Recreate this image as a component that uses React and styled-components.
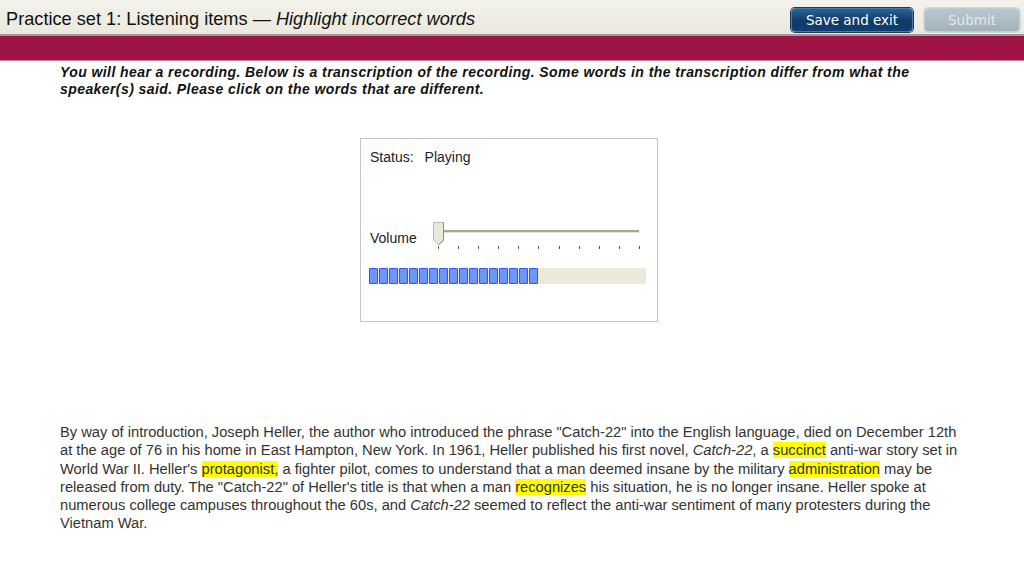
import React from "react";
import styled, { createGlobalStyle } from "styled-components";

const GlobalStyle = createGlobalStyle`
    body{
        margin: 0;
        background: #FFFFFF;
        font-family: "Liberation Sans", Arial, sans-serif;
    }
`;

export default function App() {
    const ticks = Array.from({ length: 11 });
    const played = Array.from({ length: 17 });

    return (
        <Page>
            <GlobalStyle />
            <TopBar>
                <h1>Practice set 1: Listening items — <em>Highlight incorrect words</em></h1>
                <Actions>
                    <Button>Save and exit</Button>
                    <Button disabled>Submit</Button>
                </Actions>
            </TopBar>
            <Band />
            <Content>
                <Directions>
                    You will hear a recording. Below is a transcription of the recording. Some words in the transcription differ from what the speaker(s) said. Please click on the words that are different.
                </Directions>
                <Player>
                    <StatusRow>
                        <span>Status:</span>
                        <span>Playing</span>
                    </StatusRow>
                    <VolumeRow>
                        <span>Volume</span>
                        <Slider>
                            <div className="track"></div>
                            <svg className="thumb" width="11" height="24" viewBox="0 0 11 24">
                                <path d="M0.5 0.5 H10.5 V18 L5.5 23 L0.5 18 Z" fill="#EAE7DB" stroke="#BDB9AA" />
                                <path d="M10.5 0.5 V18 L5.5 23" fill="none" stroke="#8F8B7E" />
                            </svg>
                            <div className="ticks">
                                {ticks.map((_, i) => <i key={i}></i>)}
                            </div>
                        </Slider>
                    </VolumeRow>
                    <Progress>
                        {played.map((_, i) => <Block key={i} />)}
                    </Progress>
                </Player>
                <Passage>
                    By way of introduction, Joseph Heller, the author who introduced the phrase "Catch-22" into the English language, died on December 12th at the age of 76 in his home in East Hampton, New York. In 1961, Heller published his first novel, <em>Catch-22</em>, a <Mark>succinct</Mark> anti-war story set in World War II. Heller's <Mark>protagonist,</Mark> a fighter pilot, comes to understand that a man deemed insane by the military <Mark>administration</Mark> may be released from duty. The "Catch-22" of Heller's title is that when a man <Mark>recognizes</Mark> his situation, he is no longer insane. Heller spoke at numerous college campuses throughout the 60s, and <em>Catch-22</em> seemed to reflect the anti-war sentiment of many protesters during the Vietnam War.
                </Passage>
            </Content>
        </Page>
    );
}

const Page = styled.div`
    width: 1024px;
    min-height: 586px;
    background: #FFFFFF;
`;
const TopBar = styled.header`
    height: 36px;
    display: flex;
    align-items: center;
    justify-content: space-between;
    box-sizing: border-box;
    padding: 0 4px 0 6px;
    background: linear-gradient(#F3F2EC, #EBE9DD);
    border-bottom: 2px solid #9C9B96;
    h1{
        margin: 0;
        padding-top: 4px;
        font-size: 18.2px;
        font-weight: 400;
        color: #111111;
        em{
            font-style: italic;
        }
    }
`;
const Actions = styled.div`
    display: flex;
    gap: 11px;
    padding-top: 6px;
`;
const Button = styled.button`
    height: 24px;
    box-sizing: border-box;
    border-radius: 4px;
    font-family: "DejaVu Sans", Verdana, sans-serif;
    font-size: 13.5px;
    padding: 0;
    width: ${p => p.disabled ? "96px" : "122px"};
    color: ${p => p.disabled ? "#E4EAEE" : "#FFFFFF"};
    border: 1px solid ${p => p.disabled ? "#C2CDD4" : "#4D79A6"};
    background: ${p => p.disabled
        ? "linear-gradient(#B9C6CD, #A3B2BA)"
        : "linear-gradient(#2D6197, #0E3A68 55%, #123F70)"};
    box-shadow: 0 0 0 1px ${p => p.disabled ? "#D3DADE" : "#1F3B58"};
`;
const Band = styled.div`
    height: 24px;
    background: #9D1445;
    border-bottom: 1px solid #D27B98;
`;
const Content = styled.main`
    padding: 3px 60px 0 60px;
`;
const Directions = styled.p`
    margin: 0;
    width: 900px;
    font-size: 14px;
    letter-spacing: 0.42px;
    line-height: 17px;
    font-weight: 700;
    font-style: italic;
    color: #111111;
`;
const Player = styled.section`
    width: 298px;
    height: 184px;
    box-sizing: border-box;
    margin: 40px 0 0 300px;
    padding: 10px 11px 0 8px;
    border: 1px solid #C4C4C4;
    display: flex;
    flex-direction: column;
    font-size: 14px;
    color: #222222;
`;
const StatusRow = styled.div`
    display: flex;
    gap: 11px;
    padding-left: 1px;
    line-height: 16px;
`;
const VolumeRow = styled.div`
    display: flex;
    align-items: flex-start;
    margin-top: 56px;
    span{
        padding: 9px 0 0 1px;
        width: 63px;
    }
`;
const Slider = styled.div`
    position: relative;
    width: 210px;
    height: 30px;
    .track{
        position: absolute;
        left: 6px;
        right: 4px;
        top: 9px;
        height: 2px;
        background: #A8A597;
        border-bottom: 1px solid #E6E3D6;
    }
    .thumb{
        position: absolute;
        left: 0;
        top: 1px;
    }
    .ticks{
        position: absolute;
        left: 5px;
        right: 3px;
        top: 25px;
        display: flex;
        justify-content: space-between;
        i{
            width: 1px;
            height: 3px;
            background: #555555;
        }
    }
`;
const Progress = styled.div`
    width: 277px;
    height: 16px;
    margin-top: 17px;
    background: #ECE9DB;
    display: flex;
    gap: 1px;
`;
const Block = styled.div`
    width: 9px;
    height: 16px;
    box-sizing: border-box;
    border-radius: 1px;
    background: #6B97FF;
    border: 1px solid #3552E8;
`;
const Passage = styled.p`
    margin: 101px 0 0 0;
    width: 904px;
    font-size: 14.7px;
    line-height: 18.3px;
    color: #333333;
    em{
        font-style: italic;
    }
`;
const Mark = styled.span`
    background: #FFFF00;
`;
